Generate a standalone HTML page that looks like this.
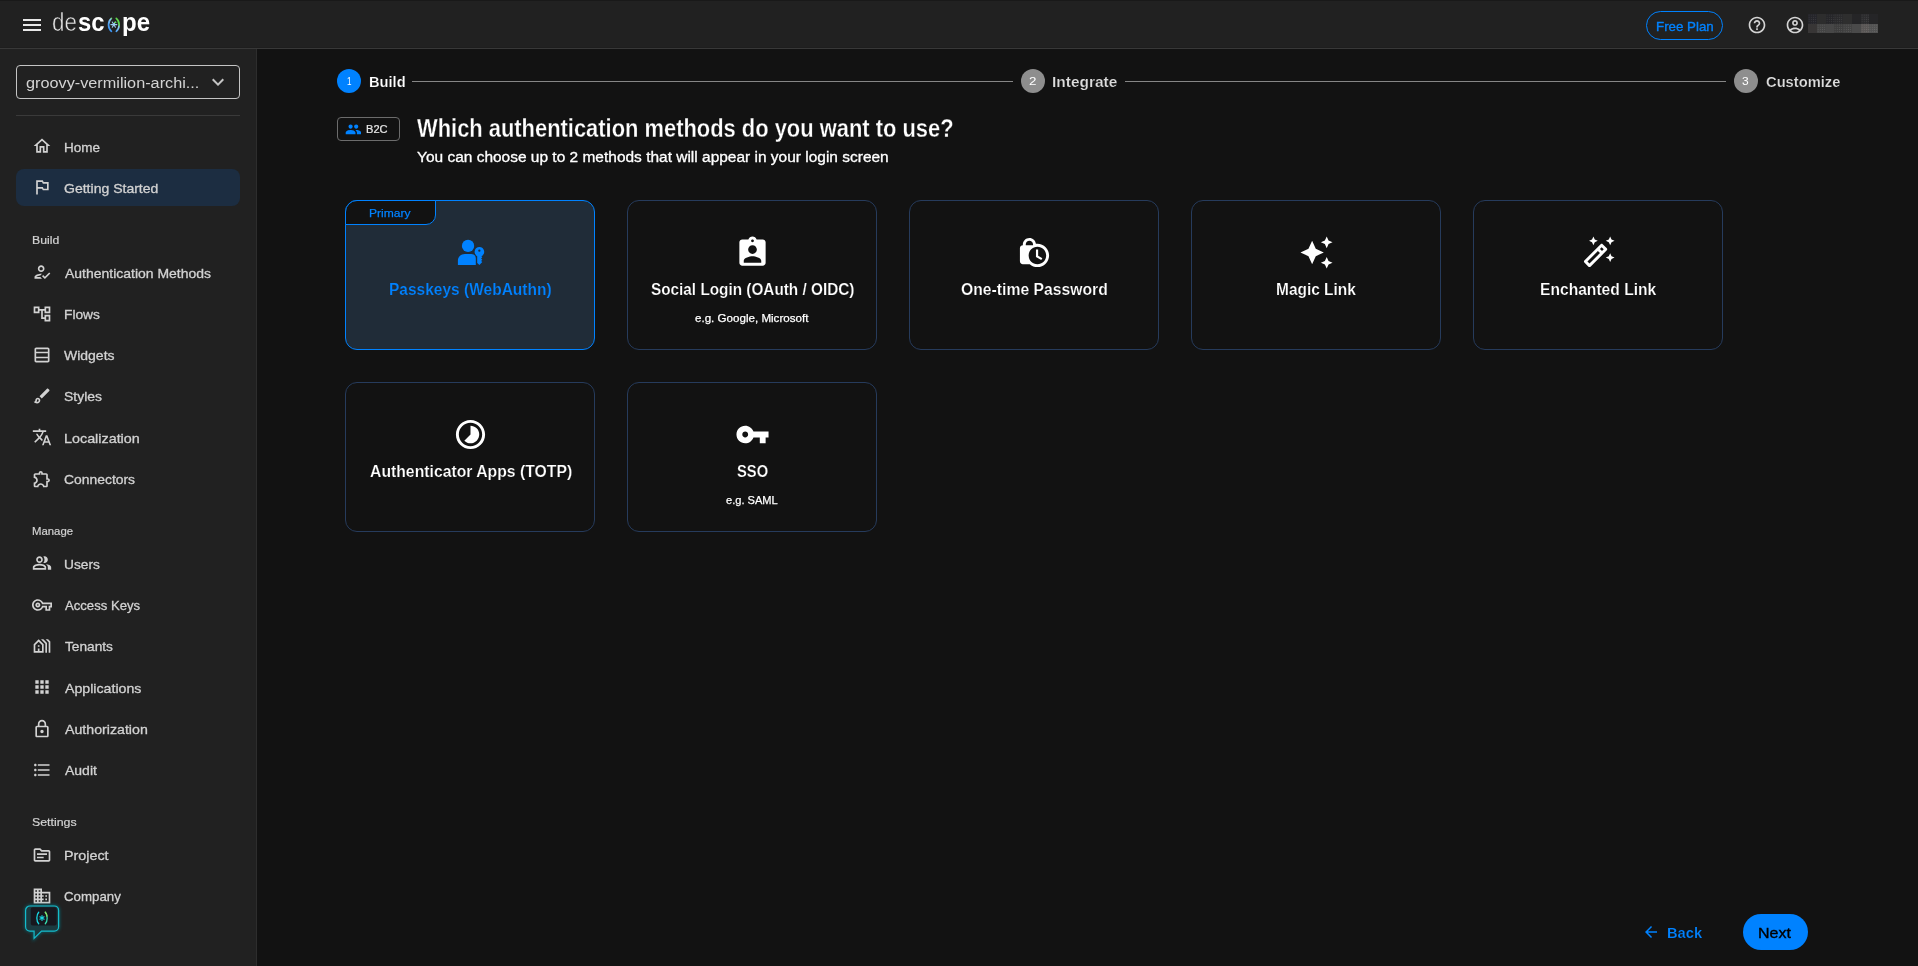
<!DOCTYPE html>
<html><head><meta charset="utf-8"><title>Descope Console</title>
<style>
*{box-sizing:border-box;margin:0;padding:0}
html,body{width:1918px;height:966px;overflow:hidden;background:#121212;font-family:"Liberation Sans",sans-serif;}
body{position:relative}
.a{position:absolute}
.i{position:absolute;display:block}
.t{position:absolute;white-space:nowrap;line-height:normal;transform-origin:0 50%;display:block}
#top{left:0;top:0;width:1918px;height:49px;background:#212121;border-bottom:1px solid #383838}
#side{left:0;top:49px;width:257px;height:917px;background:#212121;border-right:1px solid #2d2d2d}
.card{position:absolute;width:250px;height:150px;border:1px solid #263b5c;border-radius:12px;background:#121212}
.card.sel{border-color:#0082ff;background:#202c38}

</style></head>
<body>
<div id="top" class="a"></div>
<div id="side" class="a"></div>
<div class="a" style="left:0;top:0;width:1918px;height:1px;background:#191919"></div>
<div class="a" style="left:0;top:47px;width:1918px;height:1px;background:#1e1e1e"></div>
<svg class="i" style="left:20.00px;top:13.00px;width:24px;height:24px" viewBox="0 0 24 24" fill="#e8e8e8"><path d="M3 18h18v-2H3v2zm0-5h18v-2H3v2zm0-7v2h18V6H3z"/></svg>
<svg class="i" style="left:104px;top:14px;width:20px;height:22px" viewBox="104 14 20 22"><defs><linearGradient id="lg" gradientUnits="userSpaceOnUse" x1="121" y1="17" x2="107" y2="32"><stop offset="0" stop-color="#5fd84e"/><stop offset="0.33" stop-color="#5fd84e"/><stop offset="0.43" stop-color="#8fc8ee"/><stop offset="0.7" stop-color="#4a9ff5"/><stop offset="1" stop-color="#2f8ffa"/></linearGradient></defs>
<path d="M111.400 18.300C107.600 21.400 107.600 28.200 111.400 31.300" fill="none" stroke="url(#lg)" stroke-width="1.700" stroke-linecap="round"/>
<path d="M116.300 18.300C120.100 21.400 120.100 28.200 116.300 31.300" fill="none" stroke="url(#lg)" stroke-width="1.700" stroke-linecap="round"/>
<path d="M110.900 24.600h5.900M112.300 22l3.100 5.200M115.400 22l-3.100 5.200" stroke="#9ccdf0" stroke-width="1.100" stroke-linecap="round"/>
<path d="M114.600 22.400h1.300" stroke="#62d85a" stroke-width="1.100" stroke-linecap="round"/></svg>
<div class="a" style="left:1646px;top:11px;width:77px;height:29px;border:1px solid #0082ff;border-radius:15px"></div>
<svg class="i" style="left:1747.10px;top:14.90px;width:20px;height:20px" viewBox="0 0 24 24" fill="#d4d4d4"><path d="M11 18h2v-2h-2v2zm1-16C6.48 2 2 6.48 2 12s4.48 10 10 10 10-4.48 10-10S17.52 2 12 2zm0 18c-4.41 0-8-3.59-8-8s3.59-8 8-8 8 3.59 8 8-3.59 8-8 8zm0-14c-2.21 0-4 1.79-4 4h2c0-1.100.9-2 2-2s2 .9 2 2c0 2-3 1.750-3 5h2c0-2.250 3-2.500 3-5 0-2.210-1.790-4-4-4z"/></svg>
<svg class="i" style="left:1785.10px;top:14.90px;width:20px;height:20px" viewBox="0 0 24 24" fill="#d4d4d4"><path d="M12 2C6.48 2 2 6.48 2 12s4.48 10 10 10 10-4.48 10-10S17.520 2 12 2zM7.350 18.500C8.660 17.560 10.260 17 12 17s3.340.560 4.650 1.500c-1.310.940-2.910 1.500-4.650 1.500s-3.340-.560-4.650-1.500zm10.790-1.380C16.450 15.800 14.320 15 12 15s-4.450.8-6.140 2.120C4.700 15.730 4 13.950 4 12c0-4.420 3.580-8 8-8s8 3.580 8 8c0 1.950-.7 3.730-1.860 5.120zM12 6c-1.930 0-3.500 1.570-3.500 3.500S10.070 13 12 13s3.500-1.570 3.500-3.500S13.930 6 12 6zm0 5c-.83 0-1.500-.67-1.500-1.500S11.170 8 12 8s1.500.67 1.500 1.500S12.830 11 12 11z"/></svg>
<div class="a" style="left:1808.00px;top:14px;width:8.900px;height:9.800px;background-color:#25252a;background-image:radial-gradient(circle,rgba(255,255,255,0.10) 0.45px,transparent 0.75px);background-size:2.2px 2.2px"></div>
<div class="a" style="left:1808.00px;top:23.700px;width:8.900px;height:9.200px;background-color:#383636"></div>
<div class="a" style="left:1816.78px;top:14px;width:8.900px;height:9.800px;background-color:#2d2d2d"></div>
<div class="a" style="left:1816.78px;top:23.700px;width:8.900px;height:9.200px;background-color:#444444;background-image:radial-gradient(circle,rgba(255,255,255,0.13) 0.45px,transparent 0.75px);background-size:2.2px 2.2px"></div>
<div class="a" style="left:1825.56px;top:14px;width:8.900px;height:9.800px;background-color:#262629;background-image:radial-gradient(circle,rgba(255,255,255,0.10) 0.45px,transparent 0.75px);background-size:2.2px 2.2px"></div>
<div class="a" style="left:1825.56px;top:23.700px;width:8.900px;height:9.200px;background-color:#474747"></div>
<div class="a" style="left:1834.34px;top:14px;width:8.900px;height:9.800px;background-color:#2a2a2c;background-image:radial-gradient(circle,rgba(255,255,255,0.10) 0.45px,transparent 0.75px);background-size:2.2px 2.2px"></div>
<div class="a" style="left:1834.34px;top:23.700px;width:8.900px;height:9.200px;background-color:#3e3e3e;background-image:radial-gradient(circle,rgba(255,255,255,0.13) 0.45px,transparent 0.75px);background-size:2.2px 2.2px"></div>
<div class="a" style="left:1843.12px;top:14px;width:8.900px;height:9.800px;background-color:#2e2e2e"></div>
<div class="a" style="left:1843.12px;top:23.700px;width:8.900px;height:9.200px;background-color:#424242;background-image:radial-gradient(circle,rgba(255,255,255,0.13) 0.45px,transparent 0.75px);background-size:2.2px 2.2px"></div>
<div class="a" style="left:1851.90px;top:14px;width:8.900px;height:9.800px;background-color:#252527"></div>
<div class="a" style="left:1851.90px;top:23.700px;width:8.900px;height:9.200px;background-color:#4a4a4a"></div>
<div class="a" style="left:1860.68px;top:14px;width:8.900px;height:9.800px;background-color:#2c2c2e;background-image:radial-gradient(circle,rgba(255,255,255,0.10) 0.45px,transparent 0.75px);background-size:2.2px 2.2px"></div>
<div class="a" style="left:1860.68px;top:23.700px;width:8.900px;height:9.200px;background-color:#595655;background-image:radial-gradient(circle,rgba(255,255,255,0.13) 0.45px,transparent 0.75px);background-size:2.2px 2.2px"></div>
<div class="a" style="left:1869.46px;top:14px;width:8.900px;height:9.800px;background-color:#252527"></div>
<div class="a" style="left:1869.46px;top:23.700px;width:8.900px;height:9.200px;background-color:#525252;background-image:radial-gradient(circle,rgba(255,255,255,0.13) 0.45px,transparent 0.75px);background-size:2.2px 2.2px"></div>
<div class="a" style="left:16px;top:65px;width:224px;height:34px;border:1px solid #c4c4c4;border-radius:4px"></div>
<svg class="i" style="left:206.00px;top:70.30px;width:24px;height:24px" viewBox="0 0 24 24" fill="#c4c4c4"><path d="M7.41 8.59 12 13.17l4.590-4.580L18 10l-6 6-6-6 1.410-1.410z"/></svg>
<div class="a" style="left:16px;top:115px;width:224px;height:1px;background:#3a3a3a"></div>
<div class="a" style="left:16px;top:169px;width:224px;height:37px;border-radius:8px;background:#1c2d41"></div>
<svg class="i" style="left:32.00px;top:136.00px;width:20px;height:20px" viewBox="0 0 24 24" fill="#d2d2d2"><path d="m12 5.69 5 4.5V18h-2v-6H9v6H7v-7.81l5-4.5M12 3 2 12h3v8h6v-6h2v6h6v-8h3L12 3z"/></svg>
<svg class="i" style="left:32.00px;top:177.00px;width:20px;height:20px" viewBox="0 0 24 24" fill="#d2d2d2"><path d="m14 6-1-2H5v17h2v-7h5l1 2h7V6h-6zm4 8h-4l-1-2H7V6h5l1 2h5v6z"/></svg>
<svg class="i" style="left:32.00px;top:262.00px;width:20px;height:20px" viewBox="0 0 24 24" fill="#d2d2d2"><path d="M11 12c2.21 0 4-1.79 4-4s-1.79-4-4-4-4 1.79-4 4 1.79 4 4 4zm0-6c1.1 0 2 .9 2 2s-.9 2-2 2-2-.9-2-2 .9-2 2-2zM5 18c.2-.63 2.57-1.68 4.96-1.94l2.04-2c-.39-.04-.68-.06-1-.06-2.67 0-8 1.34-8 4v2h9l-2-2H5zm15.6-5.5-5.13 5.17-2.07-2.08L12 17l3.47 3.5L22 13.91z"/></svg>
<svg class="i" style="left:32.00px;top:304.00px;width:20px;height:20px" viewBox="0 0 24 24" fill="#d2d2d2"><path d="M22 11V3h-7v3H9V3H2v8h7V8h2v10h4v3h7v-8h-7v3h-2V8h2v3h7zM7 9H4V5h3v4zm10 6h3v4h-3v-4zm0-10h3v4h-3V5z"/></svg>
<svg class="i" style="left:32.00px;top:345.00px;width:20px;height:20px" viewBox="0 0 24 24" fill="#d2d2d2"><path d="M19 3H5c-1.1 0-2 .9-2 2v14c0 1.1.9 2 2 2h14c1.1 0 2-.9 2-2V5c0-1.1-.9-2-2-2zm0 2v3H5V5h14zm0 5v4H5v-4h14zM5 19v-3h14v3H5z"/></svg>
<svg class="i" style="left:32.00px;top:386.00px;width:20px;height:20px" viewBox="0 0 24 24" fill="#d2d2d2"><path d="M7 16c.55 0 1 .45 1 1 0 1.1-.9 2-2 2-.17 0-.33-.02-.5-.05.31-.55.5-1.21.5-1.95 0-.55.45-1 1-1M18.67 3c-.26 0-.51.1-.71.29L9 12.25 11.750 15l8.960-8.960c.39-.39.39-1.020 0-1.410l-1.340-1.340c-.2-.2-.45-.29-.7-.29zM7 14c-1.660 0-3 1.340-3 3 0 1.310-1.160 2-2 2 .92 1.220 2.490 2 4 2 2.210 0 4-1.790 4-4 0-1.660-1.340-3-3-3z"/></svg>
<svg class="i" style="left:32.00px;top:427.00px;width:20px;height:20px" viewBox="0 0 24 24" fill="#d2d2d2"><path d="m12.87 15.07-2.54-2.51.03-.03c1.74-1.94 2.98-4.17 3.71-6.53H17V4h-7V2H8v2H1v1.99h11.17C11.5 7.92 10.44 9.75 9 11.35 8.07 10.32 7.3 9.19 6.69 8h-2c.73 1.63 1.73 3.17 2.98 4.56l-5.09 5.02L4 19l5-5 3.11 3.11.76-2.04zM18.5 10h-2L12 22h2l1.12-3h4.75L21 22h2l-4.5-12zm-2.62 7 1.62-4.33L19.12 17h-3.24z"/></svg>
<svg class="i" style="left:32.00px;top:469.00px;width:20px;height:20px" viewBox="0 0 24 24" fill="#d2d2d2"><path d="M10.5 4.5c.28 0 .5.22.5.5v2h6v6h2c.28 0 .5.22.5.5s-.22.5-.5.5h-2v6h-2.12c-.68-1.750-2.390-3-4.380-3s-3.700 1.250-4.380 3H4v-2.120c1.750-.68 3-2.390 3-4.380 0-1.990-1.240-3.700-2.990-4.380L4 7h6V5c0-.28.22-.5.5-.5m0-2C9.120 2.500 8 3.620 8 5H4c-1.100 0-1.990.9-1.990 2v3.800h.29c1.490 0 2.700 1.210 2.700 2.700s-1.210 2.700-2.700 2.700H2V20c0 1.100.9 2 2 2h3.800v-.3c0-1.490 1.210-2.700 2.700-2.700s2.700 1.210 2.700 2.700v.3H17c1.100 0 2-.9 2-2v-4c1.380 0 2.500-1.120 2.500-2.500S20.380 11 19 11V7c0-1.100-.9-2-2-2h-4c0-1.380-1.120-2.500-2.500-2.500z"/></svg>
<svg class="i" style="left:32.00px;top:553.00px;width:20px;height:20px" viewBox="0 0 24 24" fill="#d2d2d2"><path d="M16.67 13.13C18.04 14.06 19 15.32 19 17v3h4v-3c0-2.18-3.57-3.47-6.33-3.87zM15 12c2.21 0 4-1.79 4-4s-1.79-4-4-4c-.47 0-.91.1-1.33.24C14.5 5.27 15 6.58 15 8s-.5 2.730-1.330 3.760c.42.14.86.24 1.330.24zM9 12c2.210 0 4-1.790 4-4s-1.790-4-4-4-4 1.790-4 4 1.790 4 4 4zm0-6c1.100 0 2 .9 2 2s-.9 2-2 2-2-.9-2-2 .9-2 2-2zm0 7c-2.670 0-8 1.340-8 4v3h16v-3c0-2.660-5.330-4-8-4zm6 5H3v-.99C3.200 16.290 6.300 15 9 15s5.800 1.290 6 2v1z"/></svg>
<svg class="i" style="left:32.00px;top:595.00px;width:20px;height:20px" viewBox="0 0 24 24" fill="#d2d2d2"><path d="M22 19h-6v-4h-2.680c-1.140 2.420-3.600 4-6.320 4-3.860 0-7-3.140-7-7s3.140-7 7-7c2.720 0 5.170 1.580 6.320 4H24v6h-2v4zm-4-2h2v-4h2v-2H11.940l-.23-.67C11.010 8.340 9.110 7 7 7c-2.760 0-5 2.240-5 5s2.240 5 5 5c2.110 0 4.010-1.340 4.710-3.330l.23-.67H18v4zM7 15c-1.650 0-3-1.350-3-3s1.350-3 3-3 3 1.350 3 3-1.350 3-3 3zm0-4c-.55 0-1 .45-1 1s.45 1 1 1 1-.45 1-1-.45-1-1-1z"/></svg>
<svg class="i" style="left:32.00px;top:636.00px;width:20px;height:20px" viewBox="0 0 24 24" fill="#d2d2d2"><path d="m8 4-6 6v10h12V10L8 4zm4 14H9v-3H7v3H4v-7.17l4-4 4 4V18zm-3-5H7v-2h2v2zm9 7V8.35L13.65 4h-2.83L16 9.18V20h2zm4 0V6.69L19.31 4h-2.83L20 7.52V20h2z"/></svg>
<svg class="i" style="left:32.00px;top:677.00px;width:20px;height:20px" viewBox="0 0 24 24" fill="#d2d2d2"><path d="M4 8h4V4H4v4zm6 12h4v-4h-4v4zm-6 0h4v-4H4v4zm0-6h4v-4H4v4zm6 0h4v-4h-4v4zm6-10v4h4V4h-4zm-6 4h4V4h-4v4zm6 6h4v-4h-4v4zm0 6h4v-4h-4v4z"/></svg>
<svg class="i" style="left:32.00px;top:719.00px;width:20px;height:20px" viewBox="0 0 24 24" fill="#d2d2d2"><path d="M18 8h-1V6c0-2.76-2.24-5-5-5S7 3.24 7 6v2H6c-1.1 0-2 .9-2 2v10c0 1.1.9 2 2 2h12c1.1 0 2-.9 2-2V10c0-1.1-.9-2-2-2zM9 6c0-1.66 1.34-3 3-3s3 1.34 3 3v2H9V6zm9 14H6V10h12v10zm-6-3c1.1 0 2-.9 2-2s-.9-2-2-2-2 .9-2 2 .9 2 2 2z"/></svg>
<svg class="i" style="left:32.00px;top:760.00px;width:20px;height:20px" viewBox="0 0 24 24" fill="#d2d2d2"><path d="M4 10.5c-.83 0-1.5.67-1.5 1.5s.67 1.5 1.5 1.5 1.5-.67 1.5-1.5-.67-1.5-1.5-1.5zm0-6c-.83 0-1.5.67-1.5 1.5S3.17 7.5 4 7.5 5.5 6.83 5.5 6 4.83 4.5 4 4.5zm0 12c-.83 0-1.5.68-1.5 1.5s.68 1.5 1.5 1.5 1.5-.68 1.5-1.5-.67-1.5-1.500-1.500zM7 19h14v-2H7v2zm0-6h14v-2H7v2zm0-8v2h14V5H7z"/></svg>
<svg class="i" style="left:32.00px;top:845.00px;width:20px;height:20px" viewBox="0 0 24 24" fill="#d2d2d2"><path d="m20 6h-8l-2-2H4c-1.100 0-1.990.9-1.990 2L2 18c0 1.100.9 2 2 2h16c1.100 0 2-.9 2-2V8c0-1.100-.9-2-2-2zm0 12H4V6h5.170l2 2H20v10zm-2-6H6v-2h12v2zm-4 4H6v-2h8v2z"/></svg>
<svg class="i" style="left:32.00px;top:886.00px;width:20px;height:20px" viewBox="0 0 24 24" fill="#d2d2d2"><path d="M12 7V3H2v18h20V7H12zM6 19H4v-2h2v2zm0-4H4v-2h2v2zm0-4H4V9h2v2zm0-4H4V5h2v2zm4 12H8v-2h2v2zm0-4H8v-2h2v2zm0-4H8V9h2v2zm0-4H8V5h2v2zm10 12h-8v-2h2v-2h-2v-2h2v-2h-2V9h8v10zm-2-8h-2v2h2v-2zm0 4h-2v2h2v-2z"/></svg>
<svg class="i" style="left:15px;top:895px;width:56px;height:54px" viewBox="15 895 56 54"><defs><filter id="gl" x="-30%" y="-30%" width="160%" height="160%"><feGaussianBlur stdDeviation="1.800"/></filter></defs>
<path id="bub" d="M30 906h24.200a4.400 4.400 0 0 1 4.400 4.400v16.300a4.400 4.400 0 0 1-4.400 4.400H41.500l-7.400 7.300v-7.300H30a4.400 4.400 0 0 1-4.400-4.400v-16.300A4.400 4.400 0 0 1 30 906z" fill="#154a52" stroke="#0c6c78" stroke-width="3" filter="url(#gl)" opacity="0.700"/>
<path d="M30 906h24.200a4.400 4.400 0 0 1 4.400 4.400v16.300a4.400 4.400 0 0 1-4.400 4.400H41.500l-7.400 7.300v-7.300H30a4.400 4.400 0 0 1-4.400-4.400v-16.300A4.400 4.400 0 0 1 30 906z" fill="#1b3a40" stroke="#14bccc" stroke-width="1.200"/>
<rect x="30.800" y="907.300" width="25.900" height="18.200" rx="2" fill="#17171e"/>
<path d="M38.700 912.300c-2.500 2.700-2.500 8.700 0 11.400" fill="none" stroke="#18d8e4" stroke-width="1.300" stroke-linecap="round"/>
<path d="M45.300 912.300c2.500 2.700 2.500 8.700 0 11.400" fill="none" stroke="#35dcb0" stroke-width="1.300" stroke-linecap="round"/>
<path d="M45.300 912.300c.9 1 1.500 2.300 1.700 3.800" fill="none" stroke="#8be060" stroke-width="1.300" stroke-linecap="round"/>
<path d="M42 915.600v4.800M39.900 916.800l4.200 2.400M44.100 916.800l-4.200 2.400" stroke="#18d8e4" stroke-width="1.100" stroke-linecap="round"/></svg>
<div class="a" style="left:337px;top:69px;width:24px;height:24px;border-radius:50%;background:#0082ff"></div>
<div class="a" style="left:1021px;top:69px;width:24px;height:24px;border-radius:50%;background:#8e8e8e"></div>
<div class="a" style="left:1734px;top:69px;width:24px;height:24px;border-radius:50%;background:#8e8e8e"></div>
<div class="a" style="left:412px;top:81px;width:601px;height:1px;background:#868686"></div>
<div class="a" style="left:1125px;top:81px;width:601px;height:1px;background:#868686"></div>
<div class="a" style="left:337px;top:117px;width:63px;height:24px;border:1px solid #6c6c6c;border-radius:4px"></div>
<svg class="i" style="left:344.60px;top:120.70px;width:16.8px;height:16.8px" viewBox="0 0 24 24" fill="#0082ff"><path d="M16 11c1.66 0 2.99-1.340 2.990-3S17.660 5 16 5c-1.660 0-3 1.340-3 3s1.340 3 3 3zm-8 0c1.660 0 2.990-1.340 2.990-3S9.660 5 8 5C6.340 5 5 6.340 5 8s1.340 3 3 3zm0 2c-2.330 0-7 1.170-7 3.500V19h14v-2.500c0-2.330-4.670-3.500-7-3.500zm8 0c-.29 0-.62.02-.97.05 1.160.84 1.970 1.970 1.970 3.450V19h6v-2.500c0-2.330-4.670-3.500-7-3.500z"/></svg>
<div class="card sel" style="left:345px;top:200px"></div>
<div class="card" style="left:627px;top:200px"></div>
<svg class="i" style="left:735.00px;top:235.00px;width:35px;height:35px" viewBox="0 0 24 24" fill="#fff"><path d="M19 3h-4.18C14.4 1.84 13.3 1 12 1c-1.3 0-2.4.84-2.82 2H5c-1.1 0-2 .9-2 2v14c0 1.1.9 2 2 2h14c1.1 0 2-.9 2-2V5c0-1.1-.9-2-2-2zm-7 0c.55 0 1 .45 1 1s-.45 1-1 1-1-.45-1-1 .45-1 1-1zm0 4c1.66 0 3 1.34 3 3s-1.34 3-3 3-3-1.34-3-3 1.34-3 3-3zm6 12H6v-1.4c0-2 4-3.1 6-3.1s6 1.1 6 3.1V19z"/></svg>
<div class="card" style="left:909px;top:200px"></div>
<svg class="i" style="left:1017.00px;top:235.00px;width:35px;height:35px" viewBox="0 0 24 24" fill="#fff"><path d="m14.5 14.2 2.9 1.7-.8 1.300L13 15v-5h1.500v4.200zM22 14c0 4.410-3.590 8-8 8-2.020 0-3.860-.76-5.270-2H4c-1.150 0-2-.85-2-2V9c0-1.120.89-1.960 2-2v-.5C4 4.010 6.010 2 8.500 2c2.340 0 4.240 1.790 4.460 4.080.34-.05.69-.08 1.040-.08 4.410 0 8 3.590 8 8zM6 7h5v-.74C10.880 4.990 9.800 4 8.500 4 7.120 4 6 5.120 6 6.500V7zm14 7c0-3.310-2.690-6-6-6s-6 2.690-6 6 2.690 6 6 6 6-2.690 6-6z"/></svg>
<div class="card" style="left:1191px;top:200px"></div>
<svg class="i" style="left:1299.00px;top:235.00px;width:35px;height:35px" viewBox="0 0 24 24" fill="#fff"><path d="m19 9 1.250-2.750L23 5l-2.750-1.250L19 1l-1.250 2.750L15 5l2.750 1.250L19 9zm-7.500.5L9 4 6.500 9.500 1 12l5.500 2.500L9 20l2.500-5.500L17 12l-5.500-2.500zM19 15l-1.250 2.750L15 19l2.750 1.250L19 23l1.250-2.750L23 19l-2.750-1.250L19 15z"/></svg>
<div class="card" style="left:1473px;top:200px"></div>
<svg class="i" style="left:1581.00px;top:235.00px;width:35px;height:35px" viewBox="0 0 24 24" fill="#fff"><path d="m20 7 .94-2.06L23 4l-2.06-.94L20 1l-.94 2.06L17 4l2.06.94zM8.5 7l.94-2.06L11.5 4l-2.06-.94L8.5 1l-.94 2.06L5.5 4l2.06.94zM20 12.5l-.94 2.06-2.06.94 2.06.94.94 2.06.94-2.06L23 15.500l-2.060-.94zm-2.290-3.380-2.830-2.830c-.2-.19-.45-.29-.71-.29-.26 0-.51.1-.71.29L2.290 17.460c-.39.39-.39 1.020 0 1.410l2.830 2.830c.2.2.45.3.71.3s.51-.1.71-.29l11.170-11.170c.39-.39.39-1.030 0-1.420zm-3.540-.7 1.410 1.410L14.410 11 13 9.590l1.170-1.170zM5.830 19.590l-1.410-1.410L11.590 11 13 12.410l-7.170 7.180z"/></svg>
<div class="card" style="left:345px;top:382px"></div>
<svg class="i" style="left:453.00px;top:417.00px;width:35px;height:35px" viewBox="0 0 24 24" fill="#fff"><path d="M16.24 7.76C15.07 6.59 13.54 6 12 6v6l-4.240 4.240c2.340 2.340 6.140 2.340 8.490 0 2.340-2.340 2.340-6.140-.010-8.480zM12 2C6.480 2 2 6.480 2 12s4.480 10 10 10 10-4.480 10-10S17.520 2 12 2zm0 18c-4.420 0-8-3.580-8-8s3.580-8 8-8 8 3.580 8 8-3.580 8-8 8z"/></svg>
<div class="card" style="left:627px;top:382px"></div>
<svg class="i" style="left:735.00px;top:417.00px;width:35px;height:35px" viewBox="0 0 24 24" fill="#fff"><path d="M12.65 10C11.83 7.67 9.61 6 7 6c-3.31 0-6 2.69-6 6s2.690 6 6 6c2.610 0 4.830-1.670 5.650-4H17v4h4v-4h2v-4H12.650zM7 14c-1.100 0-2-.9-2-2s.9-2 2-2 2 .9 2 2-.9 2-2 2z"/></svg>
<svg class="i" style="left:448px;top:230px;width:44px;height:44px" viewBox="0 0 44 44" fill="#0082ff">
<circle cx="20.050" cy="15.950" r="6.150"/>
<path d="M9.900 35.100V30.600C9.900 26.800 12.900 23.900 16.900 23.900H23.300C25.900 23.900 27.800 25.800 27.800 28.300V35.100Z"/>
<path fill-rule="evenodd" d="M31.400 17.100a4.800 4.800 0 0 1 2 9.150L34.300 27.300 33.100 28.500 34.300 29.700 33.100 30.900 34.300 32.100 31.400 35.100 29.200 32.900V26.150A4.800 4.800 0 0 1 31.400 17.100ZM31.350 19.500a1.150 1.150 0 1 0 0 2.300 1.150 1.150 0 0 0 0-2.300Z"/>
</svg>
<div class="a" style="left:345px;top:200px;width:91px;height:25px;border:1px solid #0082ff;border-radius:12px 0 10px 0;background:#121212"></div>
<svg class="i" style="left:1642.10px;top:922.90px;width:18px;height:18px" viewBox="0 0 24 24" fill="#0082ff"><path d="M20 11H7.83l5.590-5.590L12 4l-8 8 8 8 1.410-1.410L7.830 13H20v-2z"/></svg>
<div class="a" style="left:1743px;top:914px;width:65px;height:36px;border-radius:18px;background:#0082ff"></div>
<span class="t" style="left:51.91px;top:8px;font-size:25px;color:#e4e4e4;-webkit-text-stroke:0.55px #212121;transform:scaleX(0.8963);">de</span>
<span class="t" style="left:77.91px;top:8px;font-size:25px;color:#fff;font-weight:700;transform:scaleX(0.9542);">sc</span>
<span class="t" style="left:121.52px;top:8px;font-size:25px;color:#fff;font-weight:700;transform:scaleX(0.9612);">pe</span>
<span class="t" style="left:1655.69px;top:19px;font-size:12.8px;color:#0082ff;-webkit-text-stroke:0.35px #0082ff;transform:scaleX(1.0398);">Free Plan</span>
<span class="t" style="left:25.82px;top:74px;font-size:15.5px;color:#d4d4d4;transform:scaleX(1.0482);">groovy-vermilion-archi...</span>
<span class="t" style="left:63.65px;top:140px;font-size:12.8px;color:#d2d2d2;-webkit-text-stroke:0.3px #d2d2d2;transform:scaleX(1.0542);">Home</span>
<span class="t" style="left:64.06px;top:181px;font-size:12.8px;color:#d2d2d2;-webkit-text-stroke:0.3px #d2d2d2;transform:scaleX(1.0965);">Getting Started</span>
<span class="t" style="left:64.74px;top:266px;font-size:12.8px;color:#d2d2d2;-webkit-text-stroke:0.3px #d2d2d2;transform:scaleX(1.0916);">Authentication Methods</span>
<span class="t" style="left:63.63px;top:307px;font-size:12.8px;color:#d2d2d2;-webkit-text-stroke:0.3px #d2d2d2;transform:scaleX(1.0742);">Flows</span>
<span class="t" style="left:64.30px;top:348px;font-size:12.8px;color:#d2d2d2;-webkit-text-stroke:0.3px #d2d2d2;transform:scaleX(1.0931);">Widgets</span>
<span class="t" style="left:63.83px;top:389px;font-size:12.8px;color:#d2d2d2;-webkit-text-stroke:0.3px #d2d2d2;transform:scaleX(1.0904);">Styles</span>
<span class="t" style="left:63.59px;top:431px;font-size:12.8px;color:#d2d2d2;-webkit-text-stroke:0.3px #d2d2d2;transform:scaleX(1.1210);">Localization</span>
<span class="t" style="left:63.76px;top:472px;font-size:12.8px;color:#d2d2d2;-webkit-text-stroke:0.3px #d2d2d2;transform:scaleX(1.0860);">Connectors</span>
<span class="t" style="left:63.70px;top:557px;font-size:12.8px;color:#d2d2d2;-webkit-text-stroke:0.3px #d2d2d2;transform:scaleX(1.0721);">Users</span>
<span class="t" style="left:64.73px;top:598px;font-size:12.8px;color:#d2d2d2;-webkit-text-stroke:0.3px #d2d2d2;transform:scaleX(1.0249);">Access Keys</span>
<span class="t" style="left:64.95px;top:639px;font-size:12.8px;color:#d2d2d2;-webkit-text-stroke:0.3px #d2d2d2;transform:scaleX(1.0703);">Tenants</span>
<span class="t" style="left:64.74px;top:681px;font-size:12.8px;color:#d2d2d2;-webkit-text-stroke:0.3px #d2d2d2;transform:scaleX(1.1071);">Applications</span>
<span class="t" style="left:64.74px;top:722px;font-size:12.8px;color:#d2d2d2;-webkit-text-stroke:0.3px #d2d2d2;transform:scaleX(1.1086);">Authorization</span>
<span class="t" style="left:64.74px;top:763px;font-size:12.8px;color:#d2d2d2;-webkit-text-stroke:0.3px #d2d2d2;transform:scaleX(1.0936);">Audit</span>
<span class="t" style="left:63.59px;top:848px;font-size:12.8px;color:#d2d2d2;-webkit-text-stroke:0.3px #d2d2d2;transform:scaleX(1.1184);">Project</span>
<span class="t" style="left:63.78px;top:889px;font-size:12.8px;color:#d2d2d2;-webkit-text-stroke:0.3px #d2d2d2;transform:scaleX(1.0366);">Company</span>
<span class="t" style="left:31.61px;top:234px;font-size:11px;color:#d2d2d2;-webkit-text-stroke:0.2px #d2d2d2;transform:scaleX(1.1146);">Build</span>
<span class="t" style="left:31.67px;top:525px;font-size:11px;color:#d2d2d2;-webkit-text-stroke:0.2px #d2d2d2;transform:scaleX(1.0318);">Manage</span>
<span class="t" style="left:31.85px;top:816px;font-size:11px;color:#d2d2d2;-webkit-text-stroke:0.2px #d2d2d2;transform:scaleX(1.1216);">Settings</span>
<span class="t" style="left:347.28px;top:75px;font-size:10.8px;color:#fff;transform:scaleX(0.7502);">1</span>
<span class="t" style="left:368.52px;top:73px;font-size:15.1px;color:#fff;font-weight:700;-webkit-text-stroke:0.2px #121212;transform:scaleX(0.9710);">Build</span>
<span class="t" style="left:1029.13px;top:75px;font-size:10.8px;color:#fff;transform:scaleX(1.2375);">2</span>
<span class="t" style="left:1052.26px;top:73px;font-size:15.1px;color:#dcdcdc;font-weight:700;-webkit-text-stroke:0.2px #121212;transform:scaleX(1.0254);">Integrate</span>
<span class="t" style="left:1742.44px;top:75px;font-size:10.8px;color:#fff;transform:scaleX(1.1112);">3</span>
<span class="t" style="left:1765.70px;top:73px;font-size:15.1px;color:#dcdcdc;font-weight:700;-webkit-text-stroke:0.2px #121212;transform:scaleX(0.9748);">Customize</span>
<span class="t" style="left:365.69px;top:123px;font-size:10.6px;color:#e8e8e8;-webkit-text-stroke:0.2px #e8e8e8;transform:scaleX(1.0493);">B2C</span>
<span class="t" style="left:417.05px;top:114px;font-size:25.4px;color:#fff;font-weight:700;-webkit-text-stroke:0.3px #121212;transform:scaleX(0.8625);">Which authentication methods do you want to use?</span>
<span class="t" style="left:417.32px;top:149px;font-size:14.7px;color:#fff;-webkit-text-stroke:0.3px #fff;transform:scaleX(1.0536);">You can choose up to 2 methods that will appear in your login screen</span>
<span class="t" style="left:388.67px;top:280px;font-size:16.1px;color:#0082ff;font-weight:700;-webkit-text-stroke:0.2px #202c38;transform:scaleX(0.9637);">Passkeys (WebAuthn)</span>
<span class="t" style="left:650.86px;top:280px;font-size:16.1px;color:#fff;font-weight:700;-webkit-text-stroke:0.2px #121212;transform:scaleX(0.9518);">Social Login (OAuth / OIDC)</span>
<span class="t" style="left:695.09px;top:312px;font-size:11px;color:#fff;-webkit-text-stroke:0.25px #fff;transform:scaleX(1.0539);">e.g. Google, Microsoft</span>
<span class="t" style="left:960.81px;top:280px;font-size:16.1px;color:#fff;font-weight:700;-webkit-text-stroke:0.2px #121212;transform:scaleX(0.9768);">One-time Password</span>
<span class="t" style="left:1275.62px;top:280px;font-size:16.1px;color:#fff;font-weight:700;-webkit-text-stroke:0.2px #121212;transform:scaleX(0.9608);">Magic Link</span>
<span class="t" style="left:1539.56px;top:280px;font-size:16.1px;color:#fff;font-weight:700;-webkit-text-stroke:0.2px #121212;transform:scaleX(0.9699);">Enchanted Link</span>
<span class="t" style="left:369.51px;top:462px;font-size:16.1px;color:#fff;font-weight:700;-webkit-text-stroke:0.2px #121212;transform:scaleX(0.9789);">Authenticator Apps (TOTP)</span>
<span class="t" style="left:736.53px;top:462px;font-size:16.1px;color:#fff;font-weight:700;-webkit-text-stroke:0.2px #121212;transform:scaleX(0.9155);">SSO</span>
<span class="t" style="left:726.21px;top:494px;font-size:11px;color:#fff;-webkit-text-stroke:0.25px #fff;transform:scaleX(1.0064);">e.g. SAML</span>
<span class="t" style="left:369.14px;top:207px;font-size:11.4px;color:#0082ff;-webkit-text-stroke:0.25px #0082ff;transform:scaleX(1.0590);">Primary</span>
<span class="t" style="left:1667.02px;top:925px;font-size:14.3px;color:#0082ff;font-weight:700;-webkit-text-stroke:0.2px #121212;transform:scaleX(1.0259);">Back</span>
<span class="t" style="left:1758.18px;top:925px;font-size:14.5px;color:#000;-webkit-text-stroke:0.35px #000;transform:scaleX(1.1010);">Next</span>
</body></html>
